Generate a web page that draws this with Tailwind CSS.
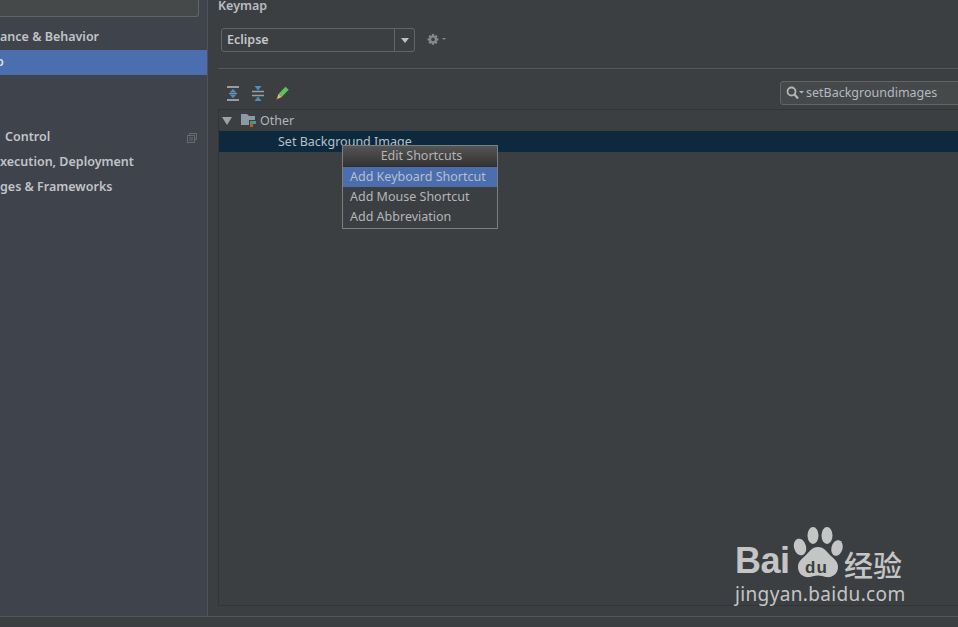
<!DOCTYPE html>
<html>
<head>
<meta charset="utf-8">
<script src="https://cdn.jsdelivr.net/npm/@tailwindcss/browser@4"></script>
</head>
<body class="m-0">
<div class="relative w-[958px] h-[627px] overflow-hidden flex flex-col bg-[#3c3f41] font-['Noto_Sans','Open_Sans',sans-serif] text-[12.5px] text-[#bbbbbb]">
  <div class="flex h-[617px] border-b border-[#555555]">
    <!-- sidebar -->
    <aside class="w-[208px] shrink-0 bg-[#3e434c] border-r border-[#4f5256] flex flex-col font-semibold text-[#c2c4c6]">
      <div class="h-[17px] w-[199px] shrink-0 mb-[8px] bg-[#45494a] border border-[#646464] border-l-0 border-t-0 rounded-br-[3px]"></div>
      <div class="h-[25px] flex items-center">ance &amp; Behavior</div>
      <div class="h-[25px] flex items-center bg-[#4b6eaf] text-[#d8dde6] -mr-px w-[207px] overflow-hidden"><span class="-ml-[4px]">p</span></div>
      <div class="h-[25px]"></div>
      <div class="h-[25px]"></div>
      <div class="h-[25px] flex items-center justify-between pr-[10px] pl-[5px]">
        <span>Control</span>
        <svg width="10" height="10" viewBox="0 0 10 10" fill="none" stroke="#66696e"><path d="M2.500 2.500V.5h7v6h-2"/><rect x=".5" y="2.500" width="7" height="7"/><path d="M2 5h4M2 7h4"/></svg>
      </div>
      <div class="h-[25px] flex items-center">xecution, Deployment</div>
      <div class="h-[25px] flex items-center">ges &amp; Frameworks</div>
    </aside>
    <!-- main -->
    <main class="flex-1 min-w-0 flex flex-col pl-[10px] relative">
      <div class="h-[12px] leading-[12px] font-semibold text-[#b9bdc0]">Keymap</div>
      <div class="flex items-center h-[24px] mt-[16px] pl-[3px] gap-[12px]">
        <div class="w-[194px] h-[24px] flex border border-[#646464] rounded-[3px] bg-[#3c3f41] font-semibold text-[#c4c6c8]">
          <div class="flex-1 flex items-center pl-[5px]">Eclipse</div>
          <div class="w-[20px] border-l border-[#646464] flex items-center justify-center">
            <svg width="8" height="5" viewBox="0 0 8 5"><path d="M0 0h8L4 5z" fill="#c0c0c0"/></svg>
          </div>
        </div>
        <svg width="22" height="14" viewBox="0 0 22 14" fill="#85888a" class="mt-[2px] -ml-[1px]">
          <path d="M6 0h2l.4 1.900 1.700-1 1.400 1.400-1 1.700 1.900.4v2L10.500 6.800l1 1.700-1.400 1.400-1.700-1L8 10.800H6l-.4-1.900-1.700 1-1.400-1.400 1-1.700L1.600 6.400v-2l1.900-.4-1-1.700L3.900.9l1.700 1z"/>
          <circle cx="7" cy="5.400" r="1.800" fill="#3c3f41"/>
          <path d="M16 4h4l-2 2z"/>
        </svg>
      </div>
      <div class="h-px bg-[#55585a] mt-[16px]"></div>
      <div class="flex items-center justify-between h-[24px] mt-[12px]">
        <div class="flex items-center gap-[13px] pl-[9px]">
          <svg width="12" height="15" viewBox="0 0 12 15"><path d="M0 1h12M0 14h12" stroke="#9a9c9e" stroke-width="2"/><path d="M6 3l3.500 3.500h-7zM6 12L2.500 8.500h7z" fill="#4a8fc4"/><path d="M2 7.500h8" stroke="#8a8c8e"/></svg>
          <svg width="12" height="15" viewBox="0 0 12 15"><path d="M0 5.500h12M0 9.500h12" stroke="#9a9c9e" stroke-width="1.500"/><path d="M6 4.500L2.500 0h7zM6 10.500l3.500 4.500h-7z" fill="#4a8fc4"/></svg>
          <svg width="13" height="14" viewBox="0 0 13 14" class="-ml-[1px]"><path d="M2.500 8L9.500.8l3.200 3-7 7.200z" fill="#5fc05f"/><path d="M2.500 8l3.200 3L.5 13.500z" fill="#e3b778"/><path d="M.5 13.500l.8-2 1.200 1.200z" fill="#c9763a"/></svg>
        </div>
        <div class="w-[190px] h-[24px] mr-[-12px] flex items-center gap-[1px] bg-[#45494a] border border-[#646464] rounded-[3px] pl-[5px] text-[#b3bac0]">
          <svg width="19" height="14" viewBox="0 0 19 14" fill="none" class="shrink-0"><circle cx="5.500" cy="5.500" r="4" stroke="#b4b6b8" stroke-width="1.800"/><path d="M8.500 8.500l3.500 4" stroke="#b4b6b8" stroke-width="2.200"/><path d="M13 5h5l-2.500 2.500z" fill="#b4b6b8"/></svg>
          <span>setBackgroundimages</span>
        </div>
      </div>
      <!-- tree -->
      <div class="mt-[4px] h-[497px] border border-[#323436] border-r-0 flex flex-col">
        <div class="h-[21px] flex items-center pl-[2px]">
          <svg width="10" height="8" viewBox="0 0 10 8" class="ml-px"><path d="M0 0h10L5 8z" fill="#a0a3a5"/></svg>
          <svg width="16" height="15" viewBox="0 0 16 15" class="ml-[9px]"><path d="M0 1h6l2 2h6v9H0z" fill="#8b9aa5"/><rect x="8" y="7" width="8" height="8" fill="#3c3f41"/><rect x="9" y="11" width="3" height="3" fill="#c75a2c"/><rect x="9" y="8" width="3" height="3" fill="#4f9a4f"/><rect x="12" y="8" width="3" height="3" fill="#4a8fc4"/></svg>
          <span class="ml-[3px] pt-px text-[#b0b6bb]">Other</span>
        </div>
        <div class="h-[21px] bg-[#0d293e] flex items-center pl-[59px] pt-px text-[#b7c0c6]">Set Background Image</div>
      </div>
      <!-- popup -->
      <div class="absolute left-[134px] top-[145px] w-[156px] h-[84px] border border-[#7c7e80] bg-[#3c3f41] flex flex-col">
        <div class="h-[21px] flex items-center justify-center bg-gradient-to-b from-[#555555] to-[#333333] border-b border-[#2e2e2e] text-[#b4b4b4] pt-px pl-[3px]">Edit Shortcuts</div>
        <div class="h-[20px] flex items-center pl-[7px] bg-[#4b6eaf] text-[#b7bfcc]">Add Keyboard Shortcut</div>
        <div class="h-[20px] flex items-center pl-[7px] text-[#b3b6b9]">Add Mouse Shortcut</div>
        <div class="h-[20px] flex items-center pl-[7px] text-[#b3b6b9]">Add Abbreviation</div>
      </div>
    </main>
  </div>
  <!-- watermark -->
  <div class="absolute left-[735px] top-[524px] w-[172px] h-[84px] text-[#c4c5c5]">
    <span class="absolute left-0 top-[17px] text-[36px] leading-[40px] font-bold font-['Liberation_Sans',sans-serif] tracking-[-0.5px]">Bai</span>
    <svg class="absolute left-[58px] top-[2px]" width="50" height="52" viewBox="0 0 50 52" fill="#c4c5c5">
      <ellipse cx="7" cy="21" rx="6" ry="8.500" transform="rotate(-15 7 21)"/>
      <ellipse cx="20" cy="9.500" rx="5.500" ry="8.500"/>
      <ellipse cx="34" cy="9.500" rx="5.500" ry="8.500"/>
      <ellipse cx="44" cy="22" rx="5.500" ry="8" transform="rotate(15 44 22)"/>
      <path d="M25 21c6 0 9 5 13 9 4 3.500 7 6 7 11 0 7-6 11-12 10-3-.5-5-1.500-8-1.500s-5 1-8 1.500c-6 1-12-3-12-10 0-5 3-7.500 7-11 4-4 7-9 13-9z"/>
    </svg>
    <span class="absolute left-[64px] top-[36px] w-[35px] text-center text-[17px] leading-[16px] font-bold font-['Liberation_Sans',sans-serif] text-[#3c3f41] tracking-[1px]">du</span>
    <span class="absolute left-[109px] top-[26px] text-[29px] leading-[29px] font-medium font-['Noto_Sans_CJK_SC',sans-serif] whitespace-nowrap">经验</span>
    <span class="absolute left-0 top-[60px] text-[19px] leading-[20px] font-['Noto_Sans','Open_Sans',sans-serif] tracking-[0.35px] whitespace-nowrap">jingyan.baidu.com</span>
  </div>
</div>
</body>
</html>
